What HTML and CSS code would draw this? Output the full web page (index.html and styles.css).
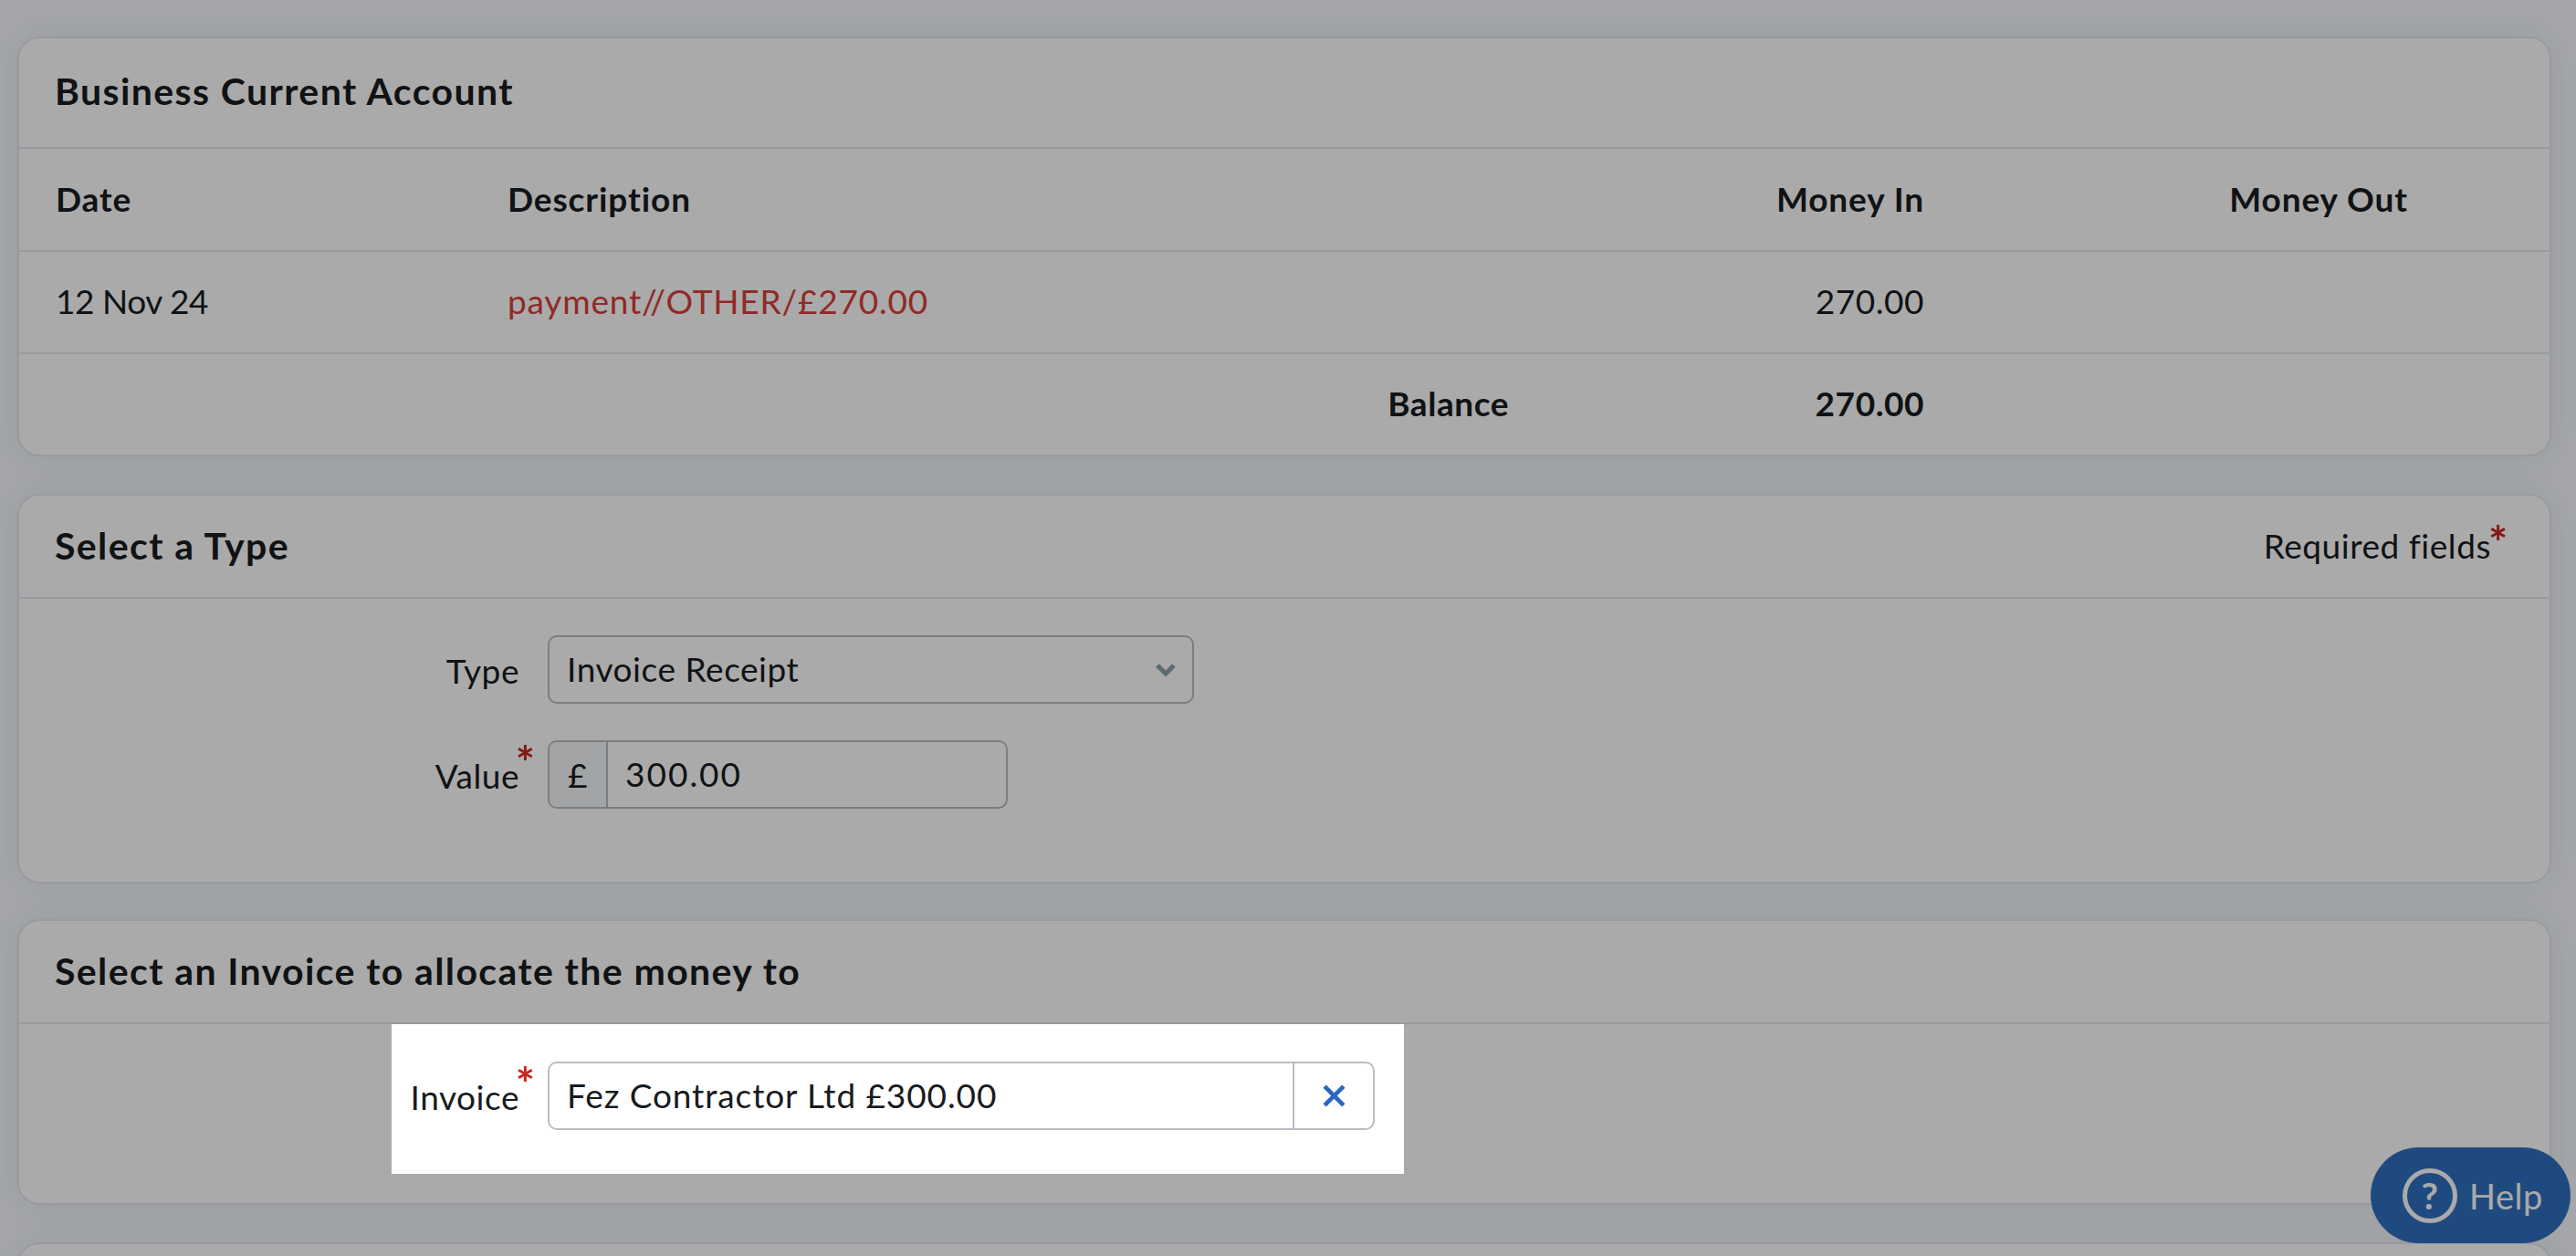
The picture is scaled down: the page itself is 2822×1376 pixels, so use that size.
FILE: index.html
```html
<!doctype html>
<html lang="en">
<head>
    <meta charset="UTF-8">
    <link rel="stylesheet" href="styles.css">
    <title>Allocate payment</title>
</head>
<body>
    <section class="card">
        <h2 class="card-title account-title">Business Current Account</h2>
        <table class="statement">
            <tr class="head">
                <th class="col-date">Date</th>
                <th class="col-desc">Description</th>
                <th class="col-in num">Money In</th>
                <th class="col-out num">Money Out</th>
            </tr>
            <tr>
                <td class="date">12 Nov 24</td>
                <td class="link">payment//OTHER/£270.00</td>
                <td class="num">270.00</td>
                <td></td>
            </tr>
            <tr class="total">
                <td></td>
                <td class="num">Balance</td>
                <td class="num">270.00</td>
                <td></td>
            </tr>
        </table>
    </section>

    <section class="card type-card">
        <div class="card-title split">
            <h2>Select a Type</h2>
            <span class="req-note">Required fields<span class="star">*</span></span>
        </div>
        <div class="card-body type-body">
            <div class="form-row">
                <label class="form-label">Type</label>
                <div class="field select-field">
                    <span class="field-text">Invoice Receipt</span>
                    <svg class="chevron" viewBox="0 0 24 16"><path d="M3 3l9 9 9-9"/></svg>
                </div>
            </div>
            <div class="form-row">
                <label class="form-label">Value<span class="star">*</span></label>
                <div class="field value-field">
                    <span class="addon">£</span>
                    <span class="field-text value-num">300.00</span>
                </div>
            </div>
        </div>
    </section>

    <section class="card">
        <h2 class="card-title">Select an Invoice to allocate the money to</h2>
        <div class="card-body invoice-body">
            <div class="form-row highlight">
                <label class="form-label">Invoice<span class="star">*</span></label>
                <div class="field invoice-field">
                    <span class="field-text">Fez Contractor Ltd £300.00</span>
                    <span class="clear">
                        <svg viewBox="0 0 26 26"><path d="M3 3l20 20M23 3L3 23"/></svg>
                    </span>
                </div>
            </div>
        </div>
    </section>

    <section class="card last"></section>

    <a class="help"><span class="help-icon">?</span>Help</a>
    <div class="backdrop"></div>
</body>
</html>
```

FILE: styles.css
```css
html{
    overflow: hidden;
    height: 100%;
}
body{
    margin: 0;
    padding: 40px 27px 0 19px;
    background: #f7fafe;
    color: #181b1e;
    font-family: "Lato", "Liberation Sans", sans-serif;
    font-size: 37px;
    letter-spacing: .55px;
}
h2{
    margin: 0;
    font-size: 41px;
    font-weight: 700;
    letter-spacing: 1.4px;
}
.card{
    background: #fff;
    border: 2px solid #e6e8f0;
    border-radius: 24px;
    box-shadow: 0 0 40px rgba(30,50,90,.09);
    margin-bottom: 41px;
}
.type-card{
    margin-bottom: 39px;
}
.card-title{
    height: 109px;
    padding: 0 39px 2px;
    display: flex;
    align-items: center;
    border-bottom: 2px solid #e6e8f0;
}
.account-title{
    height: 115px;
    padding-bottom: 4px;
}
.split{
    justify-content: space-between;
    padding-right: 64px;
}
.req-note{
    position: relative;
}
.star{
    position: absolute;
    color: #c8261e;
    font-size: 50px;
    font-weight: 700;
    line-height: 1;
    letter-spacing: 0;
}
.req-note .star{
    left: calc(100% - 3px);
    top: -6px;
}

/* statement table */
.statement{
    width: 100%;
    border-collapse: collapse;
    table-layout: fixed;
}
.statement tr{
    height: 112px;
    border-bottom: 2px solid #e6e8f0;
}
.statement tr:last-child{
    border-bottom: 0;
    height: 111px;
}
.statement th, .statement td{
    box-sizing: border-box;
    padding: 0 0 3px;
    text-align: left;
}
.statement th, .total td{
    font-weight: 700;
}
.statement th{
    letter-spacing: .9px;
}
.statement .num{
    text-align: right;
}
.col-date{ width: 535px; }
.col-desc{ width: 1097px; }
.col-in{ width: 455px; }
.col-out{ width: 685px; }
.statement tr > :first-child{
    padding-left: 40px;
}
.statement tr > :last-child{
    padding-right: 155px;
}
.statement .date{
    letter-spacing: -.45px;
}
.link{
    color: #d8403a;
    letter-spacing: .8px;
}

/* forms */
.type-body{
    padding: 40px 0 80px;
}
.invoice-body{
    padding-bottom: 32px;
}
.form-row{
    display: flex;
    align-items: center;
    margin-left: 408px;
}
.form-row + .form-row{
    margin-top: 40px;
}
.form-label{
    position: relative;
    flex: 0 0 171px;
    box-sizing: border-box;
    padding-right: 31px;
    text-align: right;
    white-space: nowrap;
    padding-top: 2px;
}
.form-label .star{
    top: -15px;
    right: 14px;
}
.field{
    box-sizing: border-box;
    height: 75px;
    display: flex;
    align-items: center;
    border: 2px solid #b8bdc3;
    border-radius: 10px;
    background: #fff;
}
.field-text{
    padding: 0 0 3px 19px;
}
.value-num{
    letter-spacing: 2px;
}
.select-field{
    width: 708px;
    justify-content: space-between;
}
.chevron{
    width: 24px;
    height: 16px;
    margin-right: 17px;
    fill: none;
    stroke: #8a9fab;
    stroke-width: 5;
}
.value-field{
    width: 504px;
}
.addon{
    align-self: stretch;
    width: 62px;
    display: flex;
    align-items: center;
    justify-content: center;
    background: #f4f6f9;
    border-right: 2px solid #b8bdc3;
    border-radius: 8px 0 0 8px;
}
.invoice-field{
    width: 906px;
    justify-content: space-between;
    letter-spacing: .9px;
}
.clear{
    align-self: stretch;
    width: 86px;
    display: flex;
    align-items: center;
    justify-content: center;
    border-left: 2px solid #b8bdc3;
}
.clear svg{
    width: 27px;
    height: 27px;
    fill: none;
    stroke: #2b66bd;
    stroke-width: 4.5;
}
.highlight{
    position: relative;
    z-index: 2;
    width: 1109px;
    box-sizing: border-box;
    padding: 41px 0 48px;
    background: #fff;
}
.last{
    height: 200px;
}

/* help button */
.help{
    position: fixed;
    right: 6px;
    bottom: 14px;
    width: 219px;
    height: 105px;
    display: flex;
    align-items: center;
    gap: 13px;
    box-sizing: border-box;
    padding-left: 35px;
    border-radius: 53px;
    background: #2f6fc0;
    color: #fff;
    font-size: 38px;
}
.help-icon{
    box-sizing: border-box;
    width: 60px;
    height: 60px;
    border: 5px solid #fff;
    border-radius: 50%;
    display: flex;
    align-items: center;
    justify-content: center;
    font-size: 40px;
    font-weight: 700;
}
.backdrop{
    position: fixed;
    inset: 0;
    z-index: 1;
    background: rgba(0,0,0,.333);
}
```
